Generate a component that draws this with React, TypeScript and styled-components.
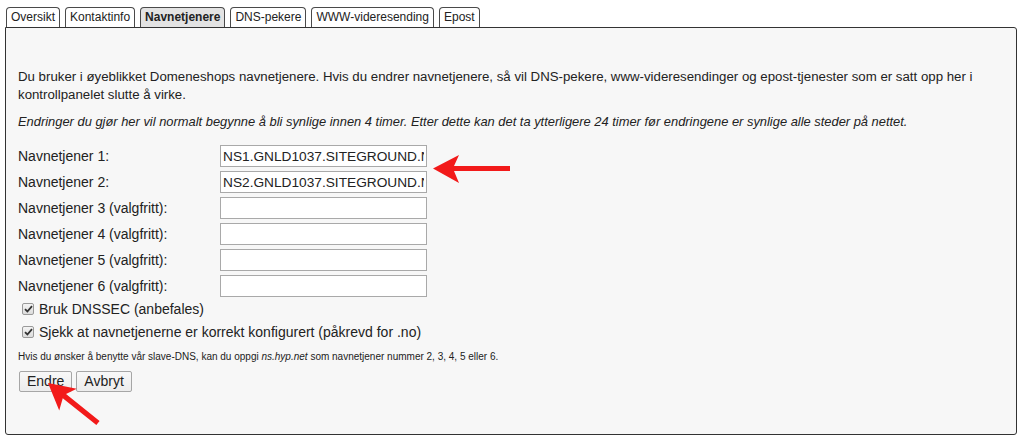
import React from "react";
import styled, { createGlobalStyle } from "styled-components";

const Global = createGlobalStyle`
  html, body { margin: 0; padding: 0; background: #ffffff; }
  body { font-family: "Liberation Sans", Arial, sans-serif; color: #222; }
`;

const Page = styled.div`
  position: relative;
  width: 1024px;
  height: 440px;
  padding: 7px 0 0 5px;
  box-sizing: border-box;
  overflow: hidden;
`;

const TabBar = styled.div`
  display: flex;
  gap: 5px;
  padding-left: 1px;
  height: 20px;
`;

const Tab = styled.div<{ $active?: boolean }>`
  height: 20px;
  box-sizing: border-box;
  padding: 0 4px;
  border: 1px solid #4a4a4a;
  border-bottom: none;
  border-radius: 4px 4px 0 0;
  background: ${(p) => (p.$active ? "#e3e3e3" : "#ffffff")};
  font-size: 12px;
  font-weight: ${(p) => (p.$active ? "bold" : "normal")};
  line-height: 19px;
  color: #222;
  white-space: nowrap;
`;

const Panel = styled.div`
  width: 1012px;
  height: 408px;
  box-sizing: border-box;
  border: 1px solid #333;
  border-radius: 0 3px 3px 3px;
  background: #f7f7f7;
  padding: 40px 12px 0 12px;
`;

const Para = styled.p<{ $italic?: boolean }>`
  margin: 0;
  font-size: ${(p) => (p.$italic ? "12.9px" : "13.25px")};
  line-height: 18px;
  font-style: ${(p) => (p.$italic ? "italic" : "normal")};
  & + & {
    margin-top: 9px;
  }
`;

const FormGrid = styled.div`
  display: grid;
  grid-template-columns: 202px 207px;
  grid-auto-rows: 22px;
  row-gap: 4px;
  margin-top: 14px;
  align-items: center;
`;

const Label = styled.label`
  font-size: 14px;
  line-height: 18px;
`;

const TextInput = styled.input`
  width: 207px;
  height: 22px;
  box-sizing: border-box;
  border: 1px solid #a9a9a9;
  background: #fff;
  padding: 1px 2px;
  font-family: "Liberation Sans", Arial, sans-serif;
  font-size: 13.7px;
  color: #222;
  outline: none;
`;

const CheckRows = styled.div`
  margin-top: 2px;
`;

const CheckRow = styled.label`
  display: flex;
  align-items: center;
  gap: 5px;
  height: 20px;
  padding-left: 4px;
  font-size: 14px;
  & + & {
    margin-top: 3px;
  }
`;

const CheckBox = styled.span`
  display: inline-flex;
  align-items: center;
  justify-content: center;
  width: 12px;
  height: 12px;
  box-sizing: border-box;
  border: 1px solid #9a9a9a;
  border-radius: 2px;
  background: linear-gradient(#f4f4f4, #dcdcdc);
`;

const Note = styled.div`
  margin-top: 8px;
  font-size: 10px;
  line-height: 14px;
`;

const Buttons = styled.div`
  display: flex;
  gap: 4px;
  margin-top: 7px;
  padding-left: 1px;
`;

const Button = styled.button`
  height: 21px;
  box-sizing: border-box;
  padding: 0 7px;
  border: 1px solid #a6a6a6;
  border-radius: 2px;
  background: linear-gradient(#f8f8f8, #ececec);
  font-family: "Liberation Sans", Arial, sans-serif;
  font-size: 14px;
  color: #222;
  line-height: 19px;
`;

const Overlay = styled.svg`
  position: absolute;
  left: 0;
  top: 0;
  pointer-events: none;
`;

const tabs = ["Oversikt", "Kontaktinfo", "Navnetjenere", "DNS-pekere", "WWW-videresending", "Epost"];

const Check = () => (
  <CheckBox>
    <svg width="9" height="8" viewBox="0 0 9 8">
      <path d="M1 4.2 L3.4 6.5 L8 1.2" fill="none" stroke="#333" strokeWidth="1.8" />
    </svg>
  </CheckBox>
);

const arrowShape = (len: number) =>
  `M0,0 L26,-13.5 L21,-2.6 L${len},-2.6 L${len},2.6 L21,2.6 L26,14.5 Z`;

export default function App() {
  const rows = [
    { label: "Navnetjener 1:", value: "NS1.GNLD1037.SITEGROUND.NET" },
    { label: "Navnetjener 2:", value: "NS2.GNLD1037.SITEGROUND.NET" },
    { label: "Navnetjener 3 (valgfritt):", value: "" },
    { label: "Navnetjener 4 (valgfritt):", value: "" },
    { label: "Navnetjener 5 (valgfritt):", value: "" },
    { label: "Navnetjener 6 (valgfritt):", value: "" },
  ];
  return (
    <>
      <Global />
      <Page>
        <TabBar>
          {tabs.map((t) => (
            <Tab key={t} $active={t === "Navnetjenere"}>
              {t}
            </Tab>
          ))}
        </TabBar>
        <Panel>
          <Para>
            Du bruker i øyeblikket Domeneshops navnetjenere. Hvis du endrer navnetjenere, så vil DNS-pekere,
            www-videresendinger og epost-tjenester som er satt opp her i kontrollpanelet slutte å virke.
          </Para>
          <Para $italic>
            Endringer du gjør her vil normalt begynne å bli synlige innen 4 timer. Etter dette kan det ta ytterligere
            24 timer før endringene er synlige alle steder på nettet.
          </Para>
          <FormGrid>
            {rows.map((r) => (
              <React.Fragment key={r.label}>
                <Label>{r.label}</Label>
                <TextInput type="text" defaultValue={r.value} />
              </React.Fragment>
            ))}
          </FormGrid>
          <CheckRows>
            <CheckRow>
              <Check />
              Bruk DNSSEC (anbefales)
            </CheckRow>
            <CheckRow>
              <Check />
              Sjekk at navnetjenerne er korrekt konfigurert (påkrevd for .no)
            </CheckRow>
          </CheckRows>
          <Note>
            Hvis du ønsker å benytte vår slave-DNS, kan du oppgi <i>ns.hyp.net</i> som navnetjener nummer 2, 3, 4, 5
            eller 6.
          </Note>
          <Buttons>
            <Button>Endre</Button>
            <Button>Avbryt</Button>
          </Buttons>
        </Panel>
        <Overlay width="1024" height="440" viewBox="0 0 1024 440">
          <path d={arrowShape(77)} transform="translate(433,168.5)" fill="#f21a1a" />
          <path d={arrowShape(64)} transform="translate(48,383) rotate(38.7)" fill="#f21a1a" />
        </Overlay>
      </Page>
    </>
  );
}
